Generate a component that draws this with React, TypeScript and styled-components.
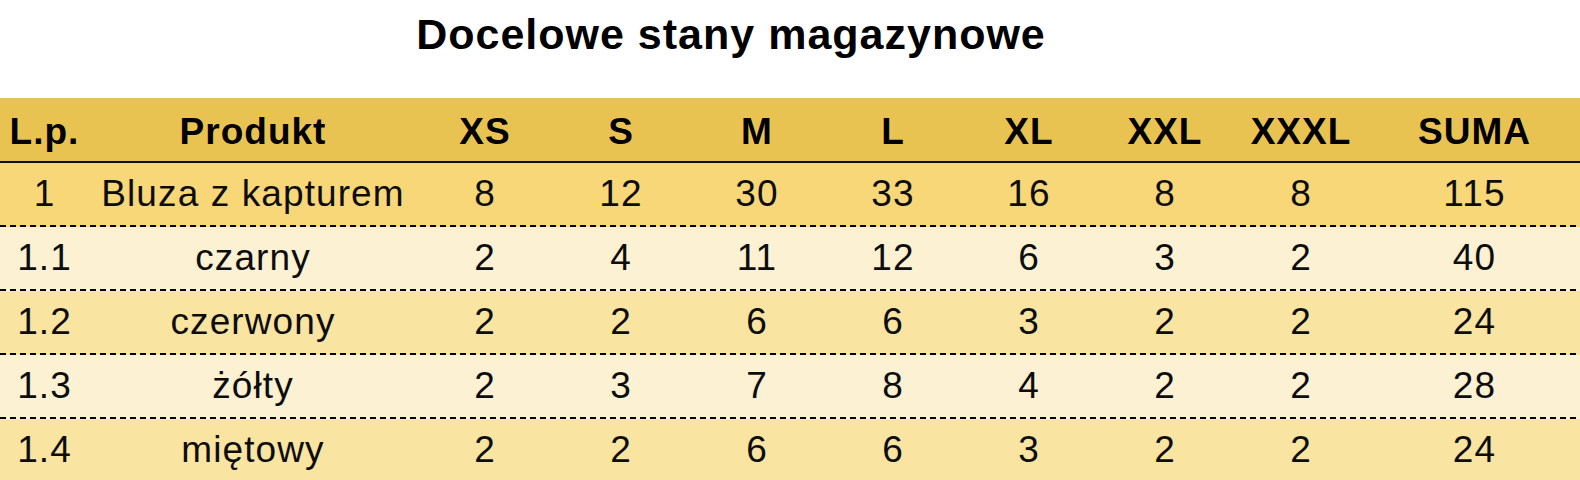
import styled, { createGlobalStyle } from 'styled-components';

const GlobalStyle = createGlobalStyle`
  html, body {
    margin: 0;
    padding: 0;
    background: #ffffff;
  }
  body {
    font-family: 'Liberation Sans', Arial, sans-serif;
    color: #0d0d0d;
    overflow: hidden;
  }
`;

type Tone = 'main' | 'light' | 'medium';

const toneColors: Record<Tone, string> = {
  main: '#f8d779',
  light: '#fcf1d2',
  medium: '#f9e4a2',
};

const Page = styled.div`
  width: 1580px;
  height: 480px;
  overflow: hidden;
`;

const TitleBar = styled.div`
  height: 98px;
  box-sizing: border-box;
  display: flex;
  justify-content: center;
  padding: 13px 118px 0 0;
`;

const Title = styled.h1`
  margin: 0;
  font-size: 43px;
  line-height: 43px;
  font-weight: 700;
  letter-spacing: 1px;
  color: #000;
`;

const Table = styled.div`
  display: flex;
  flex-direction: column;
`;

const cols = '89px 328px repeat(7, 136px) 1fr';

const HeaderRow = styled.div`
  display: grid;
  grid-template-columns: ${cols};
  height: 65px;
  box-sizing: border-box;
  padding-top: 4px;
  background: #e9c352;
  border-bottom: 2px solid #111;
  align-items: center;
`;

const HeaderCell = styled.div`
  text-align: center;
  font-size: 37px;
  font-weight: 700;
  letter-spacing: 1px;
  white-space: nowrap;
  color: #000;
`;

const Row = styled.div<{ $tone: Tone }>`
  display: grid;
  grid-template-columns: ${cols};
  height: 64px;
  box-sizing: border-box;
  padding-bottom: 2px;
  align-items: center;
  background-color: ${(p) => toneColors[p.$tone]};
  background-image: repeating-linear-gradient(
    90deg,
    #000 0 6px,
    transparent 6px 10px
  );
  background-size: 100% 2px;
  background-position: left bottom;
  background-repeat: no-repeat;
`;

const Cell = styled.div`
  text-align: center;
  font-size: 37px;
  letter-spacing: 1.1px;
  white-space: nowrap;
`;

const headers = ['L.p.', 'Produkt', 'XS', 'S', 'M', 'L', 'XL', 'XXL', 'XXXL', 'SUMA'];

const rows: { tone: Tone; cells: string[] }[] = [
  { tone: 'main', cells: ['1', 'Bluza z kapturem', '8', '12', '30', '33', '16', '8', '8', '115'] },
  { tone: 'light', cells: ['1.1', 'czarny', '2', '4', '11', '12', '6', '3', '2', '40'] },
  { tone: 'medium', cells: ['1.2', 'czerwony', '2', '2', '6', '6', '3', '2', '2', '24'] },
  { tone: 'light', cells: ['1.3', 'żółty', '2', '3', '7', '8', '4', '2', '2', '28'] },
  { tone: 'medium', cells: ['1.4', 'miętowy', '2', '2', '6', '6', '3', '2', '2', '24'] },
];

export default function App() {
  return (
    <Page>
      <GlobalStyle />
      <TitleBar>
        <Title>Docelowe stany magazynowe</Title>
      </TitleBar>
      <Table>
        <HeaderRow>
          {headers.map((h) => (
            <HeaderCell key={h}>{h}</HeaderCell>
          ))}
        </HeaderRow>
        {rows.map((r) => (
          <Row key={r.cells[0]} $tone={r.tone}>
            {r.cells.map((c, i) => (
              <Cell key={i}>{c}</Cell>
            ))}
          </Row>
        ))}
      </Table>
    </Page>
  );
}
